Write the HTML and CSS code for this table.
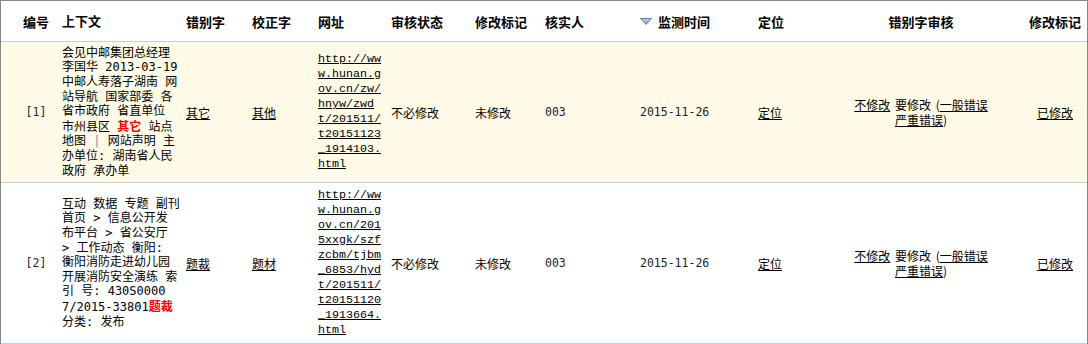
FILE: index.html
```html
<!DOCTYPE html>
<html lang="zh-CN">
<head>
<meta charset="utf-8">
<title>错别字审核</title>
<link rel="stylesheet" href="styles.css">
</head>
<body>
<div class="grid">
  <table class="tbl">
    <colgroup>
      <col class="w-no"><col class="w-ctx"><col class="w-err"><col class="w-fix"><col class="w-url">
      <col class="w-st"><col class="w-mk"><col class="w-who"><col class="w-date"><col class="w-loc">
      <col class="w-rev"><col class="w-last">
    </colgroup>
    <thead>
      <tr class="head">
        <th class="c-no">编号</th>
        <th class="c-ctx">上下文</th>
        <th>错别字</th>
        <th>校正字</th>
        <th class="c-url">网址</th>
        <th>审核状态</th>
        <th>修改标记</th>
        <th>核实人</th>
        <th class="c-date"><svg class="sort" width="12" height="7" viewBox="0 0 12 7"><defs><linearGradient id="g" x1="0" y1="0" x2="0" y2="1"><stop offset="0" stop-color="#c9dbf5"/><stop offset="1" stop-color="#6f93d6"/></linearGradient></defs><path d="M0.5 0.5 H11.5 L6 6.5 Z" fill="url(#g)" stroke="#5a7cc0" stroke-width="1" stroke-linejoin="round"/></svg>监测时间</th>
        <th>定位</th>
        <th class="c-rev">错别字审核</th>
        <th class="c-last">修改标记</th>
      </tr>
    </thead>
    <tbody>
      <tr class="row r1">
        <td class="c-no num">[1]</td>
        <td class="c-ctx">会见中邮集团总经理<br>李国华 2013-03-19<br>中邮人寿落子湖南 网<br>站导航 国家部委 各<br>省市政府 省直单位<br>市州县区 <b class="hit">其它</b> 站点<br>地图 <span class="bar">|</span> 网站声明 主<br>办单位: 湖南省人民<br>政府 承办单</td>
        <td><a href="#">其它</a></td>
        <td><a href="#">其他</a></td>
        <td class="c-url"><a href="#">http://www.hunan.gov.cn/zw/hnyw/zwdt/201511/t20151123_1914103.html</a></td>
        <td>不必修改</td>
        <td>未修改</td>
        <td class="num">003</td>
        <td class="num">2015-11-26</td>
        <td><a href="#">定位</a></td>
        <td class="c-rev"><a href="#">不修改</a> 要修改 (<a href="#">一般错误</a> <a href="#">严重错误</a>)</td>
        <td class="c-last"><a href="#">已修改</a></td>
      </tr>
      <tr class="row r2">
        <td class="c-no num">[2]</td>
        <td class="c-ctx">互动 数据 专题 副刊<br>首页 &gt; 信息公开发<br>布平台 &gt; 省公安厅<br>&gt; 工作动态 衡阳:<br>衡阳消防走进幼儿园<br>开展消防安全演练 索<br>引 号: 430S0000<br>7/2015-33801<b class="hit">题裁</b><br>分类: 发布</td>
        <td><a href="#">题裁</a></td>
        <td><a href="#">题材</a></td>
        <td class="c-url"><a href="#">http://www.hunan.gov.cn/2015xxgk/szfzcbm/tjbm_6853/hydt/201511/t20151120_1913664.html</a></td>
        <td>不必修改</td>
        <td>未修改</td>
        <td class="num">003</td>
        <td class="num">2015-11-26</td>
        <td><a href="#">定位</a></td>
        <td class="c-rev"><a href="#">不修改</a> 要修改 (<a href="#">一般错误</a> <a href="#">严重错误</a>)</td>
        <td class="c-last"><a href="#">已修改</a></td>
      </tr>
    </tbody>
  </table>
</div>
</body>
</html>
```

FILE: styles.css
```css
html, body {
  margin: 0;
  padding: 0;
  background: #ffffff;
}

body {
  font-family: "Noto Sans CJK SC", "Liberation Sans", sans-serif;
  font-size: 12px;
  color: #000;
}

.grid {
  width: 1086px;
  height: 343px;
  border: 1px solid #888888;
  border-bottom: none;
}

.tbl {
  width: 1086px;
  table-layout: fixed;
  border-collapse: separate;
  border-spacing: 0;
}

.w-no { width: 56px; }
.w-ctx { width: 125px; }
.w-err { width: 66px; }
.w-fix { width: 66px; }
.w-url { width: 73px; }
.w-st { width: 84px; }
.w-mk { width: 70px; }
.w-who { width: 95px; }
.w-date { width: 118px; }
.w-loc { width: 95px; }
.w-rev { width: 144px; }
.w-last { width: 94px; }

th, td {
  box-sizing: border-box;
  padding: 0 0 0 4px;
  text-align: left;
  vertical-align: middle;
  border-bottom: 1px solid #c2d0de;
  white-space: nowrap;
}

th {
  font-size: 13px;
  font-weight: bold;
  height: 41px;
}

.r1 td {
  height: 141px;
  background: #fffbe7;
}

.r2 td {
  height: 161px;
  background: #ffffff;
}

.c-no {
  padding-left: 14px;
  text-align: center;
}

.num {
  font-family: "DejaVu Sans Mono", monospace;
  font-size: 11.5px;
  color: #1c1c30;
}

.c-ctx {
  padding-left: 5px;
  font-family: "DejaVu Sans Mono", "Noto Sans CJK SC", monospace;
  font-size: 12px;
  line-height: 14.6px;
}

th.c-ctx {
  font-family: "Noto Sans CJK SC", sans-serif;
  font-size: 13px;
}

.hit {
  color: #ff0000;
  font-weight: bold;
  font-family: "Noto Sans CJK SC", sans-serif;
}

.bar {
  color: #7c8eae;
}

td.c-url {
  padding-right: 2px;
  white-space: normal;
  word-break: break-all;
  font-family: "Liberation Mono", monospace;
  font-size: 11.67px;
  line-height: 15px;
}

.c-date {
  white-space: nowrap;
}

.sort {
  display: inline-block;
  vertical-align: middle;
  margin: -2px 6px 0 0;
}

.c-rev {
  padding: 0;
  text-align: center;
}

td.c-rev {
  white-space: normal;
  line-height: 15px;
  word-spacing: 2px;
}

.c-last {
  padding-left: 30px;
  text-align: center;
}

a {
  color: #000;
  text-decoration: underline;
}
```
